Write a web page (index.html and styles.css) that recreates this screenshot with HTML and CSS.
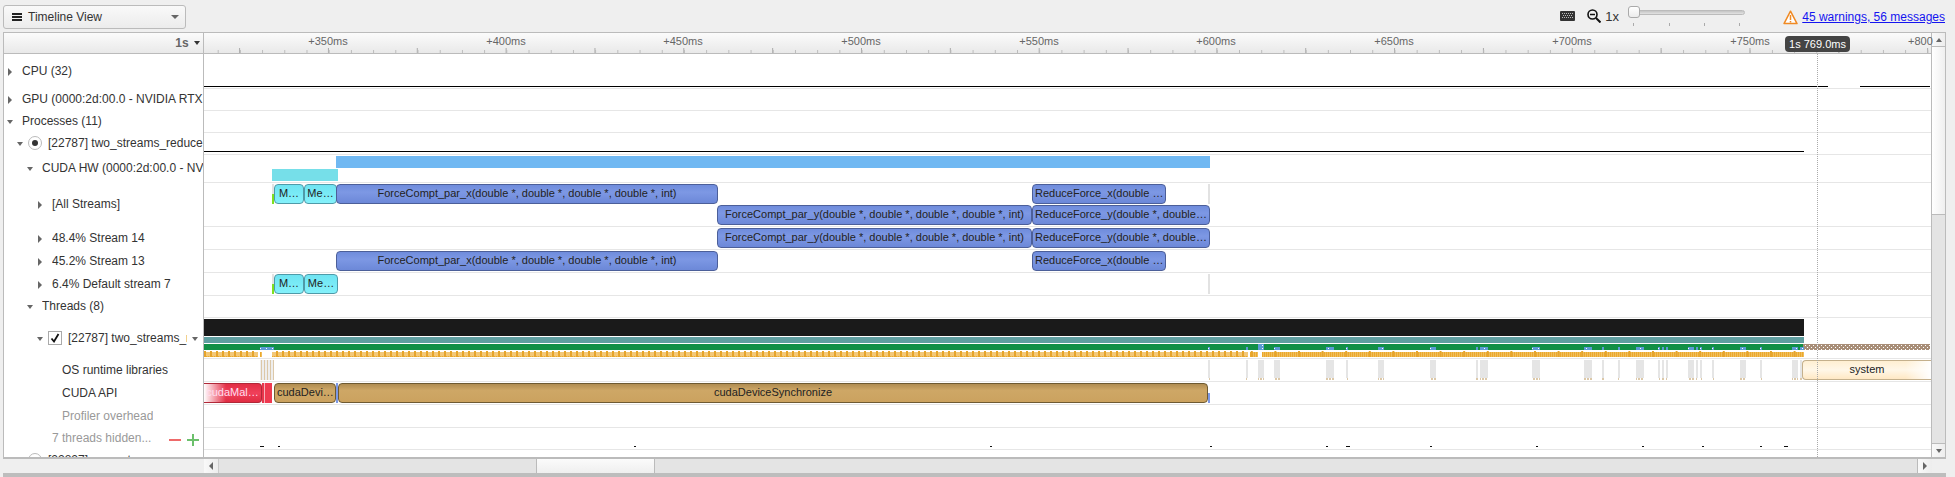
FILE: index.html
```html
<!DOCTYPE html>
<html lang="en">
<head>
    <meta charset="UTF-8">
    <title>Timeline View</title>
    <link rel="stylesheet" href="styles.css">
</head>
<body>

    <!-- top toolbar -->
    <div class="toolbar">
        <div class="view-select">
            <span class="burger"><i></i><i></i><i></i></span>
            <span class="view-select-text">Timeline View</span>
            <span class="caret"></span>
        </div>
        <div class="tools">
            <svg class="icon-keyboard" width="15" height="10" viewBox="0 0 15 10">
                <rect x="0" y="0" width="15" height="10" rx="1" fill="#333"/>
                <path d="M2 2h1v1H2zM4 2h1v1H4zM6 2h1v1H6zM8 2h1v1H8zM10 2h1v1h-1zM12 2h1v1h-1zM3 4h1v1H3zM5 4h1v1H5zM7 4h1v1H7zM9 4h1v1H9zM11 4h1v1h-1zM2 6h1v1H2zM4 6h1v1H4zM6 6h1v1H6zM8 6h1v1H8zM10 6h1v1h-1zM12 6h1v1h-1z" fill="#bbb"/>
            </svg>
            <svg class="icon-zoom" width="14" height="14" viewBox="0 0 14 14">
                <circle cx="5.5" cy="5.5" r="4.5" fill="none" stroke="#111" stroke-width="1.6"/>
                <path d="M3 5.5h5" stroke="#111" stroke-width="1.5"/>
                <path d="M9 9l4.5 4.5" stroke="#111" stroke-width="2"/>
            </svg>
            <span class="zoom-value">1x</span>
            <div class="slider">
                <div class="slider-groove"></div>
                <div class="slider-handle"></div>
                <div class="slider-ticks"><i></i><i></i><i></i><i></i></div>
            </div>
            <svg class="icon-warn" width="15" height="15" viewBox="0 0 15 15">
                <path d="M7.5 1.2L14 13.6H1z" fill="#fff" stroke="#f08a24" stroke-width="1.5" stroke-linejoin="round"/>
                <path d="M7.5 5v5M7.5 11v1.5" stroke="#f08a24" stroke-width="1.5"/>
            </svg>
            <a class="warn-link" href="#">45 warnings, 56 messages</a>
        </div>
    </div>

    <!-- timeline panel -->
    <div class="panel">
        <div class="main">
            <div class="ruler">
                <div class="ruler-scale">1s <span class="caret caret-dark"></span></div>
                <div class="ruler-axis">
                    <span class="ruler-label" style="left:94px">+350ms</span>
                    <span class="ruler-label" style="left:272px">+400ms</span>
                    <span class="ruler-label" style="left:449px">+450ms</span>
                    <span class="ruler-label" style="left:627px">+500ms</span>
                    <span class="ruler-label" style="left:805px">+550ms</span>
                    <span class="ruler-label" style="left:982px">+600ms</span>
                    <span class="ruler-label" style="left:1160px">+650ms</span>
                    <span class="ruler-label" style="left:1338px">+700ms</span>
                    <span class="ruler-label" style="left:1516px">+750ms</span>
                    <span class="ruler-label ruler-label-last" style="left:1693px">+800</span>
                    <div class="ruler-ticks"></div>
                    <span class="time-badge">1s 769.0ms</span>
                </div>
            </div>

            <div class="rows">
                <div class="label d0"><span class="twist"><i class="arrow-right"></i></span><span class="name">CPU (32)</span></div>
                <div class="track"><div class="graph-line graph-cpu-a"></div><div class="graph-line graph-cpu-b"></div></div>

                <div class="label d0"><span class="twist"><i class="arrow-right"></i></span><span class="name">GPU (0000:2d:00.0 - NVIDIA RTX</span></div>
                <div class="track"></div>

                <div class="label d0"><span class="twist"><i class="arrow-down"></i></span><span class="name">Processes (11)</span></div>
                <div class="track"></div>

                <div class="label d1"><span class="twist"><i class="arrow-down"></i></span><span class="radio"><i></i></span><span class="name">[22787] two_streams_reduce</span></div>
                <div class="track"><div class="graph-line graph-proc"></div></div>

                <div class="label d2"><span class="twist"><i class="arrow-down"></i></span><span class="name">CUDA HW (0000:2d:00.0 - NV</span></div>
                <div class="track">
                    <div class="bar-blue"></div>
                    <div class="bar-cyan"></div>
                </div>

                <div class="label d3"><span class="twist"><i class="arrow-right"></i></span><span class="name">[All Streams]</span></div>
                <div class="track">
                    <div class="shadow shadow-green" style="left:68px"></div>
                    <div class="event cyan" style="left:70px;width:30px">M…</div>
                    <div class="event cyan" style="left:100px;width:33px">Me…</div>
                    <div class="event blue" style="left:132px;width:382px">ForceCompt_par_x(double *, double *, double *, double *, int)</div>
                    <div class="event blue" style="left:828px;width:134px">ReduceForce_x(double …</div>
                    <div class="shadow" style="left:1004px"></div>
                    <div class="event blue lane2" style="left:513px;width:315px">ForceCompt_par_y(double *, double *, double *, double *, int)</div>
                    <div class="event blue lane2" style="left:828px;width:178px">ReduceForce_y(double *, double…</div>
                </div>

                <div class="label d3"><span class="twist"><i class="arrow-right"></i></span><span class="name">48.4% Stream 14</span></div>
                <div class="track">
                    <div class="event blue" style="left:513px;width:315px">ForceCompt_par_y(double *, double *, double *, double *, int)</div>
                    <div class="event blue" style="left:828px;width:178px">ReduceForce_y(double *, double…</div>
                </div>

                <div class="label d3"><span class="twist"><i class="arrow-right"></i></span><span class="name">45.2% Stream 13</span></div>
                <div class="track">
                    <div class="event blue" style="left:132px;width:382px">ForceCompt_par_x(double *, double *, double *, double *, int)</div>
                    <div class="event blue" style="left:828px;width:134px">ReduceForce_x(double …</div>
                </div>

                <div class="label d3"><span class="twist"><i class="arrow-right"></i></span><span class="name">6.4% Default stream 7</span></div>
                <div class="track">
                    <div class="shadow shadow-green" style="left:68px"></div>
                    <div class="event cyan" style="left:70px;width:30px">M…</div>
                    <div class="event cyan" style="left:100px;width:34px">Me…</div>
                    <div class="shadow" style="left:1004px"></div>
                </div>

                <div class="label d2"><span class="twist"><i class="arrow-down"></i></span><span class="name">Threads (8)</span></div>
                <div class="track"></div>

                <div class="label d4"><span class="twist"><i class="arrow-down"></i></span><span class="check"><svg width="10" height="10" viewBox="0 0 10 10"><path d="M1.5 5.5L4 8.5 8.5 1" fill="none" stroke="#111" stroke-width="1.8"/></svg></span><span class="name name-thread">[22787] two_streams_r</span><span class="caret caret-thread"></span></div>
                <div class="track">
                    <svg class="marks" width="1727" height="40" viewBox="204 318 1727 40">
                        <defs>
                            <pattern id="notch" x="0" y="347" width="6" height="3" patternUnits="userSpaceOnUse">
                                <rect width="6" height="3" fill="#5b9bd5"/>
                                <rect x="2" y="1" width="1" height="1" fill="#fff"/>
                            </pattern>
                            <pattern id="fine" x="0" y="0" width="2" height="5" patternUnits="userSpaceOnUse">
                                <rect width="1" height="5" fill="#eba92c"/>
                                <rect x="1" width="1" height="5" fill="#f0bd5c"/>
                            </pattern>
                            <pattern id="dense" x="0" y="351" width="6" height="6" patternUnits="userSpaceOnUse">
                                <rect y="1" width="6" height="4" fill="#f3c878"/>
                                <rect width="2" height="6" fill="#e6a42b"/>
                            </pattern>
                            <pattern id="sparse" x="0" y="351" width="23.6" height="6" patternUnits="userSpaceOnUse">
                                <rect width="2" height="6" fill="#e6a42b"/>
                            </pattern>
                            <pattern id="brown" x="0" y="344" width="4" height="4" patternUnits="userSpaceOnUse">
                                <rect width="4" height="4" fill="#a88e78"/>
                                <rect x="1" y="1" width="1" height="1" fill="#fff"/>
                                <rect x="3" y="3" width="1" height="1" fill="#fff"/>
                            </pattern>
                        </defs>
                        <rect x="204" y="319" width="1600" height="17" fill="#1a1a1a"/>
                        <rect x="204" y="337" width="1600" height="6" fill="#5f9ea0"/>
                        <rect x="204" y="344" width="1600" height="6" fill="#118f46"/>
                        <rect x="1803" y="344" width="127" height="6" fill="url(#brown)"/>
                        <path d="M260 347h14v3h-14zM1208 347h2v3h-2zM1246 347h2v3h-2zM1258 344h6v6h-6zM1274 347h6v3h-6zM1326 347h8v3h-8zM1346 347h2v3h-2zM1378 347h6v3h-6zM1430 347h6v3h-6zM1476 347h2v3h-2zM1480 347h8v3h-8zM1532 347h8v3h-8zM1584 347h8v3h-8zM1602 347h2v3h-2zM1618 347h2v3h-2zM1636 347h8v3h-8zM1658 347h2v3h-2zM1662 347h2v3h-2zM1666 347h2v3h-2zM1688 347h6v3h-6zM1696 347h2v3h-2zM1700 347h2v3h-2zM1712 347h2v3h-2zM1740 347h6v3h-6zM1760 347h2v3h-2zM1792 347h6v3h-6zM1800 347h4v3h-4z" fill="url(#notch)"/>
                        <path d="M204 352h54v5h-54zM260 352h2v5h-2zM272 352h976v5h-976zM1250 352h8v5h-8zM1262 352h542v5h-542z" fill="url(#fine)"/>
                        <path d="M204 351h54v6h-54zM272 351h976v6h-976z" fill="url(#dense)"/>
                        <path d="M1250 351h8v6h-8zM1262 351h542v6h-542z" fill="url(#sparse)"/>
                    </svg>
                </div>

                <div class="label d5"><span class="name">OS runtime libraries</span></div>
                <div class="track">
                    <svg class="marks" width="1727" height="22" viewBox="204 359 1727 22">
                        <defs>
                            <pattern id="beige" x="0" y="0" width="3" height="20" patternUnits="userSpaceOnUse">
                                <rect width="3" height="20" fill="#eee"/>
                                <rect width="1" height="20" fill="#dcc8a8"/>
                            </pattern>
                            <pattern id="feet" x="0" y="0" width="3" height="2" patternUnits="userSpaceOnUse">
                                <rect width="2" height="2" fill="#dcc8a8"/>
                            </pattern>
                        </defs>
                        <rect x="260" y="360" width="14" height="20" fill="url(#beige)"/>
                        <path d="M1208 360h2v18h-2zM1246 360h2v18h-2zM1258 360h6v18h-6zM1274 360h6v18h-6zM1326 360h8v18h-8zM1346 360h2v18h-2zM1378 360h6v18h-6zM1430 360h6v18h-6zM1476 360h2v18h-2zM1480 360h8v18h-8zM1532 360h8v18h-8zM1584 360h8v18h-8zM1602 360h2v18h-2zM1618 360h2v18h-2zM1636 360h8v18h-8zM1658 360h2v18h-2zM1662 360h2v18h-2zM1666 360h2v18h-2zM1688 360h6v18h-6zM1696 360h2v18h-2zM1700 360h2v18h-2zM1712 360h2v18h-2zM1740 360h6v18h-6zM1760 360h2v18h-2zM1792 360h6v18h-6zM1800 360h2v18h-2zM1380 360h4v18h-4z" fill="#e5e5e5"/>
                        <path d="M1208 378h2v2h-2zM1246 378h2v2h-2zM1258 378h6v2h-6zM1274 378h6v2h-6zM1326 378h8v2h-8zM1346 378h2v2h-2zM1378 378h6v2h-6zM1430 378h6v2h-6zM1476 378h2v2h-2zM1480 378h8v2h-8zM1532 378h8v2h-8zM1584 378h8v2h-8zM1602 378h2v2h-2zM1618 378h2v2h-2zM1636 378h8v2h-8zM1658 378h2v2h-2zM1662 378h2v2h-2zM1666 378h2v2h-2zM1688 378h6v2h-6zM1696 378h2v2h-2zM1700 378h2v2h-2zM1712 378h2v2h-2zM1740 378h6v2h-6zM1760 378h2v2h-2zM1792 378h6v2h-6zM1800 378h2v2h-2z" fill="url(#feet)"/>
                    </svg>
                    <div class="event system" style="left:1598px;width:129px">system</div>
                </div>

                <div class="label d5"><span class="name">CUDA API</span></div>
                <div class="track">
                    <div class="event red" style="left:0;width:58px">cudaMal…</div>
                    <div class="red-sliver"></div>
                    <div class="event tan" style="left:70px;width:62px">cudaDevi…</div>
                    <div class="blue-sliver" style="left:132px"></div>
                    <div class="event tan" style="left:134px;width:870px">cudaDeviceSynchronize</div>
                    <div class="blue-sliver blue-sliver-low" style="left:1004px"></div>
                </div>

                <div class="label d5 muted"><span class="name">Profiler overhead</span></div>
                <div class="track"></div>

                <div class="label d6 muted">
                    <span class="name">7 threads hidden...</span>
                    <svg class="hide-icons" width="30" height="12" viewBox="0 0 30 12">
                        <path d="M0 6h12" stroke="#ee6a6a" stroke-width="2"/>
                        <path d="M18 6h12M24 0v12" stroke="#6cc06c" stroke-width="2"/>
                    </svg>
                </div>
                <div class="track">
                    <svg class="marks" width="1727" height="21" viewBox="204 428 1727 21">
                        <path d="M260 446h4v1h-4zM278 446h2v1h-2zM634 446h2v1h-2zM990 446h2v1h-2zM1210 446h2v1h-2zM1326 446h2v1h-2zM1346 446h4v1h-4zM1430 446h2v1h-2zM1536 446h2v1h-2zM1642 446h2v1h-2zM1702 446h2v1h-2zM1760 446h2v1h-2zM1784 446h4v1h-4z" fill="#111"/>
                    </svg>
                </div>

                <div class="label d1"><span class="twist"></span><span class="radio"></span><span class="name">[22827] convert</span></div>
                <div class="track"></div>

                <div class="cursor-line"></div>
            </div>
        </div>

        <div class="vscroll">
            <div class="scroll-btn scroll-btn-v"><i class="arrow-up"></i></div>
            <div class="vscroll-thumb"></div>
            <div class="scroll-fill"></div>
            <div class="scroll-btn scroll-btn-v scroll-btn-end"><i class="arrow-down"></i></div>
        </div>
    </div>

    <div class="hscroll">
        <div class="scroll-btn scroll-btn-h"><i class="arrow-left"></i></div>
        <div class="hscroll-before"></div>
        <div class="hscroll-thumb"></div>
        <div class="scroll-fill"></div>
        <div class="scroll-btn scroll-btn-h scroll-btn-right"><i class="arrow-right"></i></div>
    </div>
    <div class="bottom-bar"></div>

</body>
</html>
```

FILE: styles.css
```css
/* general */
html, body {
    height: 100%;
}

body {
    margin: 0;
    background-color: #efefef;
    font-family: "Liberation Sans", Arial, sans-serif;
    font-size: 12px;
    color: #333;
    overflow: hidden;
}

/* --- toolbar --- */
.toolbar {
    height: 32px;
    box-sizing: border-box;
    padding: 5px 10px 0 3px;
    display: flex;
    justify-content: space-between;
    align-items: flex-start;
}

.view-select {
    width: 183px;
    height: 24px;
    box-sizing: border-box;
    padding: 0 6px 0 8px;
    display: flex;
    align-items: center;
    border: 1px solid #bbb;
    border-radius: 3px;
    background: linear-gradient(#f9f9f9, #ececec);
}

.view-select-text {
    flex: 1;
    margin-left: 6px;
}

.burger {
    width: 10px;
    display: flex;
    flex-direction: column;
    gap: 1px;
}

.burger i {
    height: 2px;
    background-color: #222;
}

.caret {
    width: 0;
    height: 0;
    border-left: 4px solid transparent;
    border-right: 4px solid transparent;
    border-top: 4px solid #666;
}

.caret-dark {
    display: inline-block;
    border-left-width: 3px;
    border-right-width: 3px;
    border-top-color: #333;
    margin-left: 2px;
    vertical-align: 2px;
}

.caret-thread {
    flex: none;
    margin-left: 5px;
    border-left-width: 3px;
    border-right-width: 3px;
    margin-top: 2px;
}

.tools {
    display: flex;
    align-items: flex-start;
}

.icon-keyboard {
    margin-top: 6px;
}

.icon-zoom {
    margin: 4px 0 0 12px;
}

.zoom-value {
    margin: 4px 0 0 4px;
    font-size: 13px;
    width: 23px;
}

/* zoom slider */
.slider {
    position: relative;
    width: 117px;
    height: 22px;
    margin-right: 38px;
}

.slider-groove {
    margin-top: 5px;
    height: 5px;
    background: linear-gradient(#c4c4c4, #e2e2e2);
    border: 1px solid #bbb;
    border-radius: 3px;
    box-sizing: border-box;
}

.slider-handle {
    position: absolute;
    top: 1px;
    left: 0;
    width: 12px;
    height: 12px;
    box-sizing: border-box;
    background: linear-gradient(#fff, #ececec);
    border: 1px solid #aaa;
    border-radius: 3px;
}

.slider-ticks {
    display: flex;
    justify-content: space-between;
    margin: 8px 5px 0;
}

.slider-ticks i {
    width: 1px;
    height: 3px;
    background-color: #aaa;
}

.icon-warn {
    margin-top: 5px;
}

.warn-link {
    margin: 2px 0 0 4px;
    color: #1414f0;
    font-size: 12px;
    line-height: 20px;
}

/* --- panel --- */
.panel {
    margin-left: 3px;
    width: 1943px;
    height: 427px;
    box-sizing: border-box;
    display: flex;
    border: 1px solid #bbb;
    border-bottom-width: 2px;
    background-color: #fff;
}

.main {
    flex: 1;
    min-width: 0;
    display: flex;
    flex-direction: column;
}

.ruler {
    height: 21px;
    flex: none;
    display: flex;
    box-sizing: border-box;
    border-bottom: 1px solid #bbb;
    background: linear-gradient(#fbfbfb, #e9e9e9);
}

.ruler-scale {
    width: 200px;
    flex: none;
    box-sizing: border-box;
    padding: 3px 3px 0 0;
    text-align: right;
    color: #666;
    font-weight: bold;
    font-size: 12px;
    border-right: 1px solid #bbb;
}

.ruler-axis {
    position: relative;
    flex: 1;
}

.ruler-label {
    position: absolute;
    top: 2px;
    width: 60px;
    text-align: center;
    color: #666;
    font-size: 11px;
}

.ruler-label-last {
    width: 34px;
    margin-left: 11px;
    text-align: left;
}

.ruler-ticks {
    position: absolute;
    left: 0;
    right: 0;
    bottom: 0;
    height: 5px;
    background-image:
        linear-gradient(90deg, #bbb 1px, transparent 1px),
        linear-gradient(90deg, #aaa 1px, transparent 1px);
    background-size: 22.21px 3px, 88.85px 5px;
    background-position: 13.7px 100%, 35.1px 100%;
    background-repeat: repeat-x;
}

.time-badge {
    position: absolute;
    top: 3px;
    left: 1581px;
    width: 65px;
    height: 16px;
    line-height: 16px;
    text-align: center;
    background-color: #444;
    color: #fff;
    border-radius: 4px;
    font-size: 11px;
}

/* rows: label column + track column */
.rows {
    position: relative;
    flex: 1;
    min-height: 0;
    overflow: hidden;
    display: grid;
    grid-template-columns: 200px 1fr;
    grid-template-rows: 35px 22px 22px 22px 28px 44px 23px 23px 23px 22px 41px 23px 23px 23px 22px 22px;
}

.label {
    display: flex;
    align-items: center;
    box-sizing: border-box;
    padding-bottom: 2px;
    border-right: 1px solid #bbb;
    white-space: nowrap;
    overflow: hidden;
    min-width: 0;
}

.name {
    overflow: hidden;
    min-width: 0;
    flex: 0 1 auto;
}

.name-thread {
    width: 119px;
    flex: none;
}

.d0 { padding-left: 0; }
.d1 { padding-left: 10px; }
.d2 { padding-left: 20px; }
.d3 { padding-left: 30px; }
.d4 { padding-left: 30px; }
.d5 { padding-left: 58px; }
.d6 { padding-left: 48px; }

.muted {
    color: #999;
}

.twist {
    width: 12px;
    flex: none;
    margin-right: 6px;
    display: flex;
    justify-content: center;
}

.d1 .twist,
.d4 .twist {
    margin-right: 2px;
}

.arrow-right,
.arrow-left,
.arrow-down,
.arrow-up {
    display: block;
    width: 0;
    height: 0;
    border-style: solid;
    border-color: transparent;
}

.arrow-right {
    border-width: 4px 0 4px 4px;
    border-left-color: #666;
    margin-top: 2px;
}

.arrow-left {
    border-width: 4px 4px 4px 0;
    border-right-color: #666;
}

.arrow-down {
    border-width: 4px 3.5px 0;
    border-top-color: #666;
    margin-top: 2px;
}

.arrow-up {
    border-width: 0 3.5px 4px;
    border-bottom-color: #666;
}

.radio {
    width: 14px;
    height: 14px;
    flex: none;
    margin-right: 6px;
    box-sizing: border-box;
    display: flex;
    align-items: center;
    justify-content: center;
    border: 1px solid #bbb;
    border-radius: 50%;
    background-color: #fff;
}

.radio i {
    width: 6px;
    height: 6px;
    border-radius: 50%;
    background-color: #333;
}

.check {
    width: 14px;
    height: 14px;
    flex: none;
    margin-right: 6px;
    box-sizing: border-box;
    display: flex;
    align-items: center;
    justify-content: center;
    border: 1px solid #aaa;
    background-color: #fff;
}

.hide-icons {
    margin-left: 18px;
    flex: none;
    margin-top: 4px;
}

.track {
    position: relative;
    min-width: 0;
    box-sizing: border-box;
    border-bottom: 1px solid #e6e6e6;
}

.marks {
    display: block;
    shape-rendering: crispEdges;
}

.graph-line {
    position: absolute;
    height: 1px;
    background-color: #000;
}

.graph-cpu-a {
    top: 32px;
    left: 0;
    width: 1624px;
}

.graph-cpu-b {
    top: 32px;
    left: 1656px;
    width: 70px;
}

.graph-proc {
    top: 18px;
    left: 0;
    width: 1600px;
}

.bar-blue {
    position: absolute;
    top: 1px;
    left: 132px;
    width: 874px;
    height: 12px;
    background-color: #70b8f2;
}

.bar-cyan {
    position: absolute;
    top: 14px;
    left: 68px;
    width: 66px;
    height: 12px;
    background-color: #76dfe9;
}

/* events */
.event {
    position: absolute;
    top: 1px;
    height: 20px;
    box-sizing: border-box;
    padding: 0 2px;
    font-size: 11px;
    line-height: 16px;
    text-align: center;
    white-space: nowrap;
    overflow: hidden;
    border: 1px solid;
    border-radius: 4px;
    color: #222;
}

.lane2 {
    top: 22px;
}

.blue {
    background: linear-gradient(#6f8cdc, #7d98e4 40%, #6c88d8);
    border-color: #4c5f99;
}

.cyan {
    background: linear-gradient(#6fe4f2, #84f1fb);
    border-color: #4f9aa8;
}

.tan {
    background: linear-gradient(#b08d52, #cea766 35%, #cba25f);
    border-color: #6e5a32;
}

.red {
    background: linear-gradient(90deg, #fff, rgba(255, 255, 255, 0) 22px), linear-gradient(#e22e44, #f0405a 50%, #e02c42);
    border-color: #b02838;
    border-left: 0;
    border-radius: 0 4px 4px 0;
    color: #fde;
}

.system {
    background: linear-gradient(90deg, rgba(255, 255, 255, 0) 80%, #fff 100%), linear-gradient(#ffefd2, #fff7e8 50%, #ffe8c4);
    border-color: #c4b08c;
    border-right: 0;
    border-radius: 4px 0 0 4px;
}

.red-sliver {
    position: absolute;
    top: 1px;
    left: 58px;
    width: 10px;
    height: 20px;
    background: linear-gradient(90deg, #e8364c 0 2px, #f7b0b8 2px 3px, #ee3a50 3px);
}

.blue-sliver {
    position: absolute;
    top: 1px;
    width: 2px;
    height: 20px;
    background-color: #7d98e4;
}

.blue-sliver-low {
    top: 11px;
    height: 10px;
}

.shadow {
    position: absolute;
    top: 1px;
    width: 2px;
    height: 20px;
    background-color: #e2e2e2;
}

.shadow-green {
    background: linear-gradient(#e2e2e2 50%, #7fe020 50%);
}

.cursor-line {
    position: absolute;
    top: 0;
    bottom: 0;
    left: 1813px;
    width: 0;
    border-left: 1px dotted #aaa;
    pointer-events: none;
}

/* --- scrollbars --- */
.vscroll {
    width: 14px;
    flex: none;
    display: flex;
    flex-direction: column;
    border-left: 1px solid #bbb;
    box-sizing: border-box;
    background-color: #e4e4e4;
}

.scroll-btn {
    flex: none;
    display: flex;
    align-items: center;
    justify-content: center;
    background: linear-gradient(90deg, #f9f9f9, #ededed);
}

.scroll-btn .arrow-right,
.scroll-btn .arrow-down {
    margin-top: 0;
}

.scroll-btn-v {
    height: 14px;
    border-bottom: 1px solid #bbb;
    box-sizing: border-box;
}

.scroll-btn-end {
    border-top: 1px solid #bbb;
    border-bottom: 0;
}

.scroll-btn-h {
    width: 14px;
}

.scroll-btn-right {
    border-left: 1px solid #bbb;
}

.vscroll-thumb {
    height: 168px;
    flex: none;
    background: linear-gradient(90deg, #fff, #efefef);
    border-bottom: 1px solid #bbb;
    box-sizing: border-box;
}

.scroll-fill {
    flex: 1;
    background-color: #e4e4e4;
}

.hscroll {
    margin-left: 204px;
    width: 1728px;
    height: 14px;
    display: flex;
    background-color: #e4e4e4;
}

.hscroll-before {
    width: 317px;
    flex: none;
    background-color: #e4e4e4;
    border-left: 1px solid #ccc;
}

.hscroll-thumb {
    width: 119px;
    flex: none;
    box-sizing: border-box;
    background: linear-gradient(#fbfbfb, #efefef);
    border-left: 1px solid #bbb;
    border-right: 1px solid #bbb;
}

.bottom-bar {
    margin-left: 3px;
    width: 1943px;
    height: 4px;
    background-color: #bdbdbd;
}
```
